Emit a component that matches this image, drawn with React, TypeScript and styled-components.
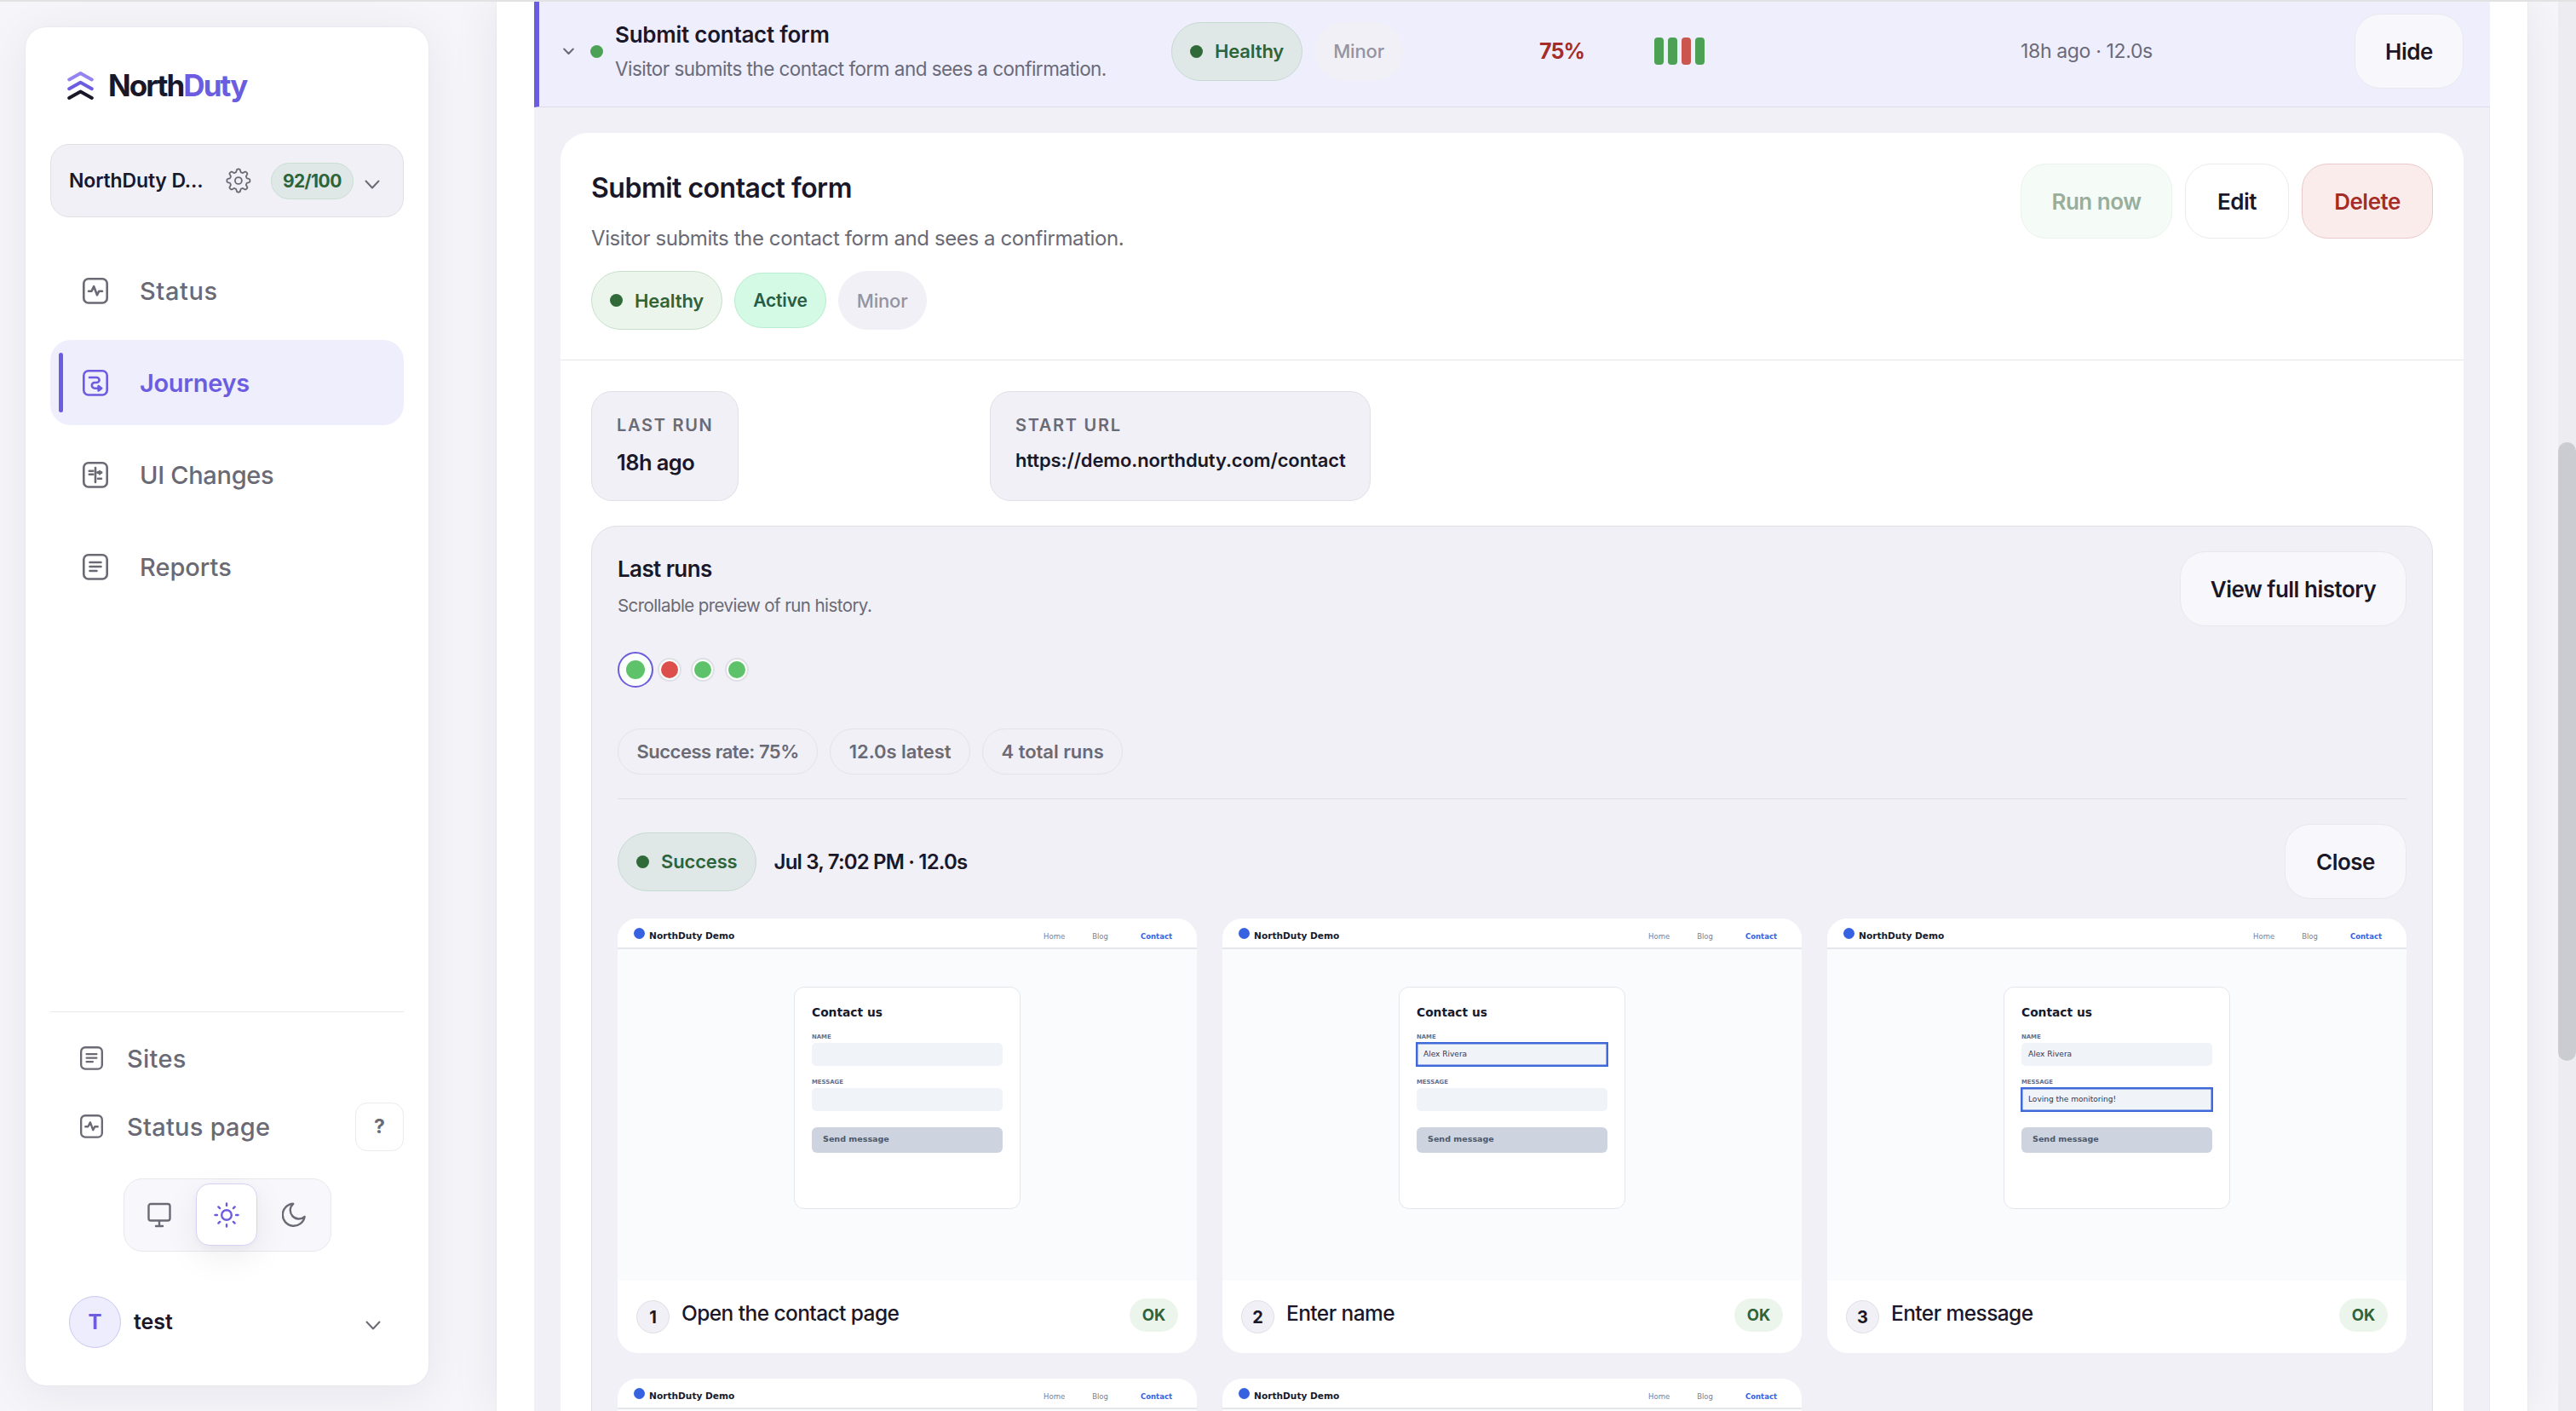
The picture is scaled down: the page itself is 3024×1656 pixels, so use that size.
import React, { useState } from 'react';
import styled, { createGlobalStyle, css } from 'styled-components';

const GlobalStyle = createGlobalStyle`
  * {
    box-sizing: border-box;
  }

  body {
    margin: 0;
    overflow: hidden;
    color: #1a1828;
    background: #f5f5fa;
    font-family: 'Inter', sans-serif;
  }

  button {
    font-family: inherit;
    cursor: pointer;
  }

  p, h1, h2, h3 {
    margin: 0;
  }
`;

/* ---------- page ---------- */

const Page = styled.div`
  display: flex;
  height: 1656px;
  border-top: 2px solid #e2e2e3;
  overflow: hidden;
`;

const Sidebar = styled.aside`
  display: flex;
  flex-direction: column;
  flex: none;
  width: 473px;
  height: 1594px;
  margin: 30px 80px 0 30px;
  padding: 0 29px;
  border-radius: 24px;
  background: #fff;
  box-shadow: 0 8px 56px rgba(26, 24, 40, 0.07), 0 0 2px rgba(26, 24, 40, 0.08);
`;

const Main = styled.main`
  flex: none;
  width: 2384px;
  height: 1654px;
  padding: 0 44px;
  background: #fff;
  box-shadow: 0 0 56px rgba(26, 24, 40, 0.07), 0 0 2px rgba(26, 24, 40, 0.08);
`;

const ScrollTrack = styled.div`
  flex: none;
  width: 21px;
  height: 1654px;
  margin-left: 36px;
  padding-top: 517px;
  background: #ededf1;
`;

const ScrollThumb = styled.div`
  height: 726px;
  border-radius: 11px;
  background: #cbccd1;
`;

/* ---------- sidebar ---------- */

const Brand = styled.div`
  display: flex;
  align-items: center;
  height: 68px;
  margin-top: 34px;
  padding-left: 20px;
  font-size: 35px;
  font-weight: 700;
  letter-spacing: -1.9px;

  svg {
    margin-right: 17px;
  }

  span {
    color: #6c5ce0;
  }
`;

const SiteSelect = styled.div`
  display: flex;
  align-items: center;
  height: 86px;
  margin-top: 35px;
  padding: 0 27px 0 21px;
  border: 1px solid #e0e0e6;
  border-radius: 22px;
  background: #f1f0f6;
`;

const SiteName = styled.span`
  width: 185px;
  font-size: 23px;
  font-weight: 600;
  letter-spacing: -0.15px;
  white-space: nowrap;
`;

const Score = styled.span`
  width: 98px;
  height: 43px;
  margin: 0 13px 0 23px;
  border: 1px solid #c9dfd0;
  border-radius: 22px;
  background: #dfe8e7;
  color: #2f6338;
  font-size: 21px;
  font-weight: 700;
  line-height: 41px;
  letter-spacing: -0.6px;
  text-align: center;
`;

const Nav = styled.nav`
  display: flex;
  flex-direction: column;
  gap: 8px;
  margin-top: 36px;
`;

const NavItem = styled.a<{ $active?: boolean; $track?: number }>`
  display: flex;
  align-items: center;
  height: 100px;
  padding-left: 10px;
  border-radius: 24px;
  color: ${(p) => (p.$active ? '#6c5ce0' : '#6a6a75')};
  background: ${(p) => (p.$active ? '#eeeefd' : 'transparent')};
  font-size: 29px;
  font-weight: ${(p) => (p.$active ? 600 : 500)};
  letter-spacing: ${(p) => p.$track ?? -0.3}px;

  &::before {
    content: '';
    width: 5px;
    height: 70px;
    margin-right: 23px;
    border-radius: 3px;
    background: ${(p) => (p.$active ? '#6c5ce0' : 'transparent')};
  }

  svg {
    margin-right: 37px;
  }
`;

const SideFooter = styled.div`
  margin-top: auto;
  padding: 14px 0 44px;
  border-top: 1px solid #e9e9ed;
`;

const FooterRow = styled.div`
  display: flex;
  align-items: center;
  height: 80px;
  padding-left: 35px;
  color: #6a6a75;
  font-size: 29px;
  font-weight: 500;
  letter-spacing: 0.25px;

  svg {
    margin-right: 28px;
  }
`;

const HelpButton = styled.button`
  width: 57px;
  height: 57px;
  margin-left: auto;
  padding: 0;
  border: 1px solid #ebebee;
  border-radius: 14px;
  background: #fff;
  color: #6a6a75;
  font-size: 23px;
  font-weight: 700;
`;

const ThemeSwitch = styled.div`
  display: flex;
  gap: 7px;
  width: 244px;
  height: 86px;
  margin: 21px auto 0;
  padding: 5px;
  border: 1px solid #e8e8ed;
  border-radius: 22px;
  background: #f8f8fc;
`;

const ThemeOption = styled.button<{ $on?: boolean }>`
  display: flex;
  align-items: center;
  justify-content: center;
  width: 72px;
  height: 73px;
  padding: 0;
  border: 1px solid transparent;
  border-radius: 16px;
  background: none;
  color: #6a6a75;

  ${(p) =>
    p.$on &&
    css`
      border-color: #d6d2f5;
      background: #fff;
      color: #6c5ce0;
      box-shadow: 0 12px 40px rgba(26, 24, 40, 0.07), 0 3px 8px rgba(26, 24, 40, 0.04);
    `}
`;

const UserRow = styled.div`
  display: flex;
  align-items: center;
  height: 62px;
  margin-top: 51px;
  padding: 0 27px 0 22px;
  font-size: 25px;
  font-weight: 600;

  svg {
    margin-left: auto;
  }
`;

const Avatar = styled.span`
  width: 61px;
  height: 61px;
  margin-right: 15px;
  border: 1px solid #cbc6f1;
  border-radius: 50%;
  background: #eeedfd;
  color: #6c5ce0;
  font-size: 24px;
  font-weight: 700;
  line-height: 60px;
  text-align: center;
`;

const Down = styled.svg`
  flex: none;
  margin-top: 9px;
`;

/* ---------- journeys table ---------- */

const JourneyRow = styled.div`
  display: grid;
  grid-template-columns: 32px 29px 653px 432px 135px 430px 1fr auto;
  align-items: center;
  height: 124px;
  padding: 0 31px 7px 28px;
  border-left: 6px solid #6c5ce0;
  border-bottom: 1px solid #dddde9;
  background: #eeeefd;
`;

const JourneyTitle = styled.h3`
  font-size: 26px;
  font-weight: 600;
  line-height: 41px;
  letter-spacing: -0.25px;
`;

const JourneySub = styled.p`
  color: #6a6a79;
  font-size: 22.5px;
  line-height: 40px;
  letter-spacing: -0.54px;
`;

const Percent = styled.span`
  color: #a52c27;
  font-size: 25px;
  font-weight: 700;
  letter-spacing: -0.9px;
`;

const Bars = styled.div`
  display: flex;
  gap: 5px;
`;

const Bar = styled.i<{ $fail?: boolean }>`
  width: 11px;
  height: 32px;
  border-radius: 4px;
  background: ${(p) => (p.$fail ? '#cb5650' : '#4ca155')};
`;

const When = styled.span`
  color: #6a6a79;
  font-size: 23px;
  letter-spacing: -0.35px;
`;

const Pills = styled.div`
  display: flex;
  align-items: center;
  gap: 14px;
`;

const pillTones = {
  healthy: css`
    border-color: #c6dfcb;
    background: #ecf5ec;
    color: #2f6338;
  `,
  shaded: css`
    border-color: #c6dad0;
    background: #dfe8e7;
    color: #2f6338;
  `,
  active: css`
    height: 65px;
    border-color: #b9edcf;
    background: #d4f9e4;
    color: #275c46;
    font-size: 21px;
  `,
  muted: css`
    border-color: #f1f0f6;
    background: #f1f0f6;
    color: #9494a1;
    font-weight: 500;
  `,
};

const Pill = styled.span<{ $tone: keyof typeof pillTones }>`
  display: flex;
  align-items: center;
  gap: 14px;
  height: 69px;
  padding: 0 21px;
  border: 1px solid;
  border-radius: 35px;
  font-size: 22px;
  font-weight: 600;
  letter-spacing: -0.15px;
  ${(p) => pillTones[p.$tone]}
`;

const Dot = styled.i<{ $color?: string }>`
  width: 15px;
  height: 15px;
  border-radius: 50%;
  background: ${(p) => p.$color || '#2f6a38'};
`;

const buttonKinds = {
  plain: css`
    border-color: #ebebee;
    background: #fff;
  `,
  soft: css`
    border-color: #e8e8ef;
    background: #f8f8fc;
  `,
  run: css`
    border-color: #eaf3ed;
    background: #f5fbf6;
    color: #97ae9d;
  `,
  danger: css`
    border-color: #ebc9ca;
    background: #fbecec;
    color: #a52c27;
  `,
};

const Button = styled.button<{ $kind: keyof typeof buttonKinds; $width: number }>`
  width: ${(p) => p.$width}px;
  height: 88px;
  padding: 0;
  border: 1px solid;
  border-radius: 30px;
  color: #1a1828;
  font-size: 26px;
  font-weight: 600;
  letter-spacing: -0.5px;
  ${(p) => buttonKinds[p.$kind]}
`;

/* ---------- journey detail ---------- */

const Expanded = styled.div`
  height: 1600px;
  padding: 30px 30px 0 31px;
  border-right: 1px solid #e9e9f0;
  background: #f1f0f6;
`;

const Detail = styled.section`
  height: 1600px;
  border-radius: 32px;
  background: #fff;
`;

const DetailHeader = styled.header`
  display: flex;
  justify-content: space-between;
  align-items: flex-start;
  height: 267px;
  padding: 36px;
  border-bottom: 1px solid #e6e6ea;
`;

const DetailTitle = styled.h2`
  font-size: 32px;
  font-weight: 600;
  line-height: 57px;
  letter-spacing: -0.5px;
`;

const DetailSub = styled.p`
  margin-bottom: 8px;
  color: #6a6a75;
  font-size: 24px;
  line-height: 61px;
  letter-spacing: -0.4px;
`;

const Actions = styled.div`
  display: flex;
  gap: 15px;
`;

const DetailBody = styled.div`
  padding: 36px;
`;

const Stats = styled.div`
  display: grid;
  grid-template-columns: 468px auto;
  justify-content: start;
  justify-items: start;
  margin-bottom: 29px;
`;

const Stat = styled.div<{ $width: number }>`
  width: ${(p) => p.$width}px;
  height: 129px;
  padding: 24px 29px 0;
  border: 1px solid #e0e0e6;
  border-radius: 24px;
  background: #f1f0f6;
`;

const StatLabel = styled.div`
  color: #6a6a75;
  font-size: 20px;
  font-weight: 600;
  line-height: 30px;
  letter-spacing: 1.7px;
  white-space: nowrap;
`;

const StatValue = styled.div<{ $url?: boolean }>`
  margin-top: 8px;
  font-size: ${(p) => (p.$url ? 22 : 25.5)}px;
  font-weight: 600;
  line-height: ${(p) => (p.$url ? 36 : 42)}px;
  letter-spacing: ${(p) => (p.$url ? -0.12 : -0.6)}px;
  white-space: nowrap;
`;

const Runs = styled.section`
  height: 1200px;
  padding: 29px 30px;
  border: 1px solid #e0e0e6;
  border-radius: 30px;
  background: #f1f0f6;
`;

const RunsHeader = styled.div`
  display: flex;
  justify-content: space-between;
  height: 87px;
`;

const RunsTitle = styled.h3`
  font-size: 26px;
  font-weight: 600;
  line-height: 41px;
  letter-spacing: -0.6px;
`;

const RunsSub = styled.p`
  color: #6a6a75;
  font-size: 20.5px;
  line-height: 45px;
  letter-spacing: -0.58px;
`;

const RunDots = styled.div`
  display: flex;
  align-items: center;
  gap: 11.5px;
  height: 42px;
  margin-top: 31px;
`;

const RunDot = styled.button<{ $fail?: boolean; $selected?: boolean }>`
  display: flex;
  align-items: center;
  justify-content: center;
  width: ${(p) => (p.$selected ? 42 : 28)}px;
  height: ${(p) => (p.$selected ? 42 : 28)}px;
  margin-right: ${(p) => (p.$selected ? -7 : 0)}px;
  padding: 0;
  border: ${(p) => (p.$selected ? '2px solid #6c5ce0' : '2px solid #dfe0e5')};
  border-radius: 50%;
  background: #fbfffb;

  &::after {
    content: '';
    width: ${(p) => (p.$selected ? 22 : 20)}px;
    height: ${(p) => (p.$selected ? 22 : 20)}px;
    border-radius: 50%;
    background: ${(p) => (p.$fail ? '#dc4f4a' : '#5ec26a')};
  }
`;

const Chips = styled.div`
  display: flex;
  gap: 14px;
  margin-top: 48px;
  padding-bottom: 28px;
  border-bottom: 1px solid #dfdfe6;
`;

const Chip = styled.span<{ $track: number }>`
  height: 54px;
  padding: 0 21.5px;
  border: 1px solid #e3e3e9;
  border-radius: 27px;
  color: #6a6a75;
  font-size: 22px;
  font-weight: 600;
  line-height: 53px;
  letter-spacing: ${(p) => p.$track}px;
`;

const RunHead = styled.div`
  display: flex;
  align-items: center;
  height: 88px;
  margin: 29px 0 23px;
`;

const RunDate = styled.span`
  margin: 0 auto 0 21px;
  font-size: 24px;
  font-weight: 600;
  letter-spacing: -0.82px;
`;

const Steps = styled.div`
  display: grid;
  grid-template-columns: repeat(3, 1fr);
  gap: 30px;
`;

const StepCard = styled.article`
  height: 510px;
  border-radius: 24px;
  background: #fff;
  overflow: hidden;
`;

const Caption = styled.div`
  display: flex;
  align-items: flex-start;
  padding: 23px 22px 0;
  white-space: nowrap;
`;

const StepNumber = styled.span`
  width: 39px;
  height: 39px;
  margin-right: 14px;
  border: 1px solid #dedee5;
  border-radius: 50%;
  background: #f1f0f6;
  font-size: 20px;
  font-weight: 700;
  line-height: 38px;
  text-align: center;
`;

const StepTitle = styled.span`
  margin: -3px auto 0 0;
  font-size: 24.5px;
  font-weight: 500;
  line-height: 36px;
  letter-spacing: -0.58px;
`;

const Ok = styled.span`
  width: 57px;
  height: 39px;
  margin-top: -2px;
  border-radius: 20px;
  background: #ecf5ec;
  color: #2f6338;
  font-size: 18.5px;
  font-weight: 700;
  line-height: 39px;
  text-align: center;
`;

/* ---------- demo site shown in the step previews ---------- */

const Shot = styled.div`
  height: 425px;
  background: #f9fbfd;
  color: #161a2b;
  font-family: 'DejaVu Sans', sans-serif;
`;

const ShotBar = styled.div`
  display: flex;
  align-items: center;
  height: 36px;
  padding: 2px 29px 0 19px;
  border-bottom: 2px solid #e3e6eb;
  background: #fff;
`;

const ShotDot = styled.i`
  width: 13px;
  height: 13px;
  margin: -2px 5px 0 0;
  border-radius: 50%;
  background: #3661e0;
`;

const ShotBrand = styled.b`
  margin: 5px auto 0 0;
  font-size: 10.62px;
`;

const ShotLink = styled.span<{ $current?: boolean }>`
  margin: 6px 0 0 ${(p) => (p.$current ? 38 : 32)}px;
  color: ${(p) => (p.$current ? '#3661e0' : '#7a8191')};
  font-size: 8.5px;
  font-weight: ${(p) => (p.$current ? 700 : 400)};
`;

const Form = styled.div`
  width: 266px;
  height: 261px;
  margin: 44px auto 0;
  padding: 21px 20px 0;
  border: 1px solid #e3e6ec;
  border-radius: 12px;
  background: #fff;
`;

const FormTitle = styled.div`
  padding-bottom: 2px;
  font-size: 13.8px;
  font-weight: 700;
  line-height: 16px;
`;

const Label = styled.div`
  margin-top: 12px;
  color: #64708a;
  font-size: 6.9px;
  font-weight: 700;
  line-height: 14px;
`;

const Field = styled.div<{ $focus?: boolean }>`
  height: 27px;
  padding-left: 8px;
  border-radius: ${(p) => (p.$focus ? 0 : 5)}px;
  background: #f0f3f8;
  box-shadow: ${(p) => (p.$focus ? '0 0 0 1px #3f68d8, inset 0 0 0 1.5px #3f68d8' : 'none')};
  color: #30384c;
  font-size: 9.03px;
  line-height: 26px;
`;

const Send = styled.div`
  height: 30px;
  margin-top: 19px;
  padding-left: 13px;
  border-radius: 6px;
  background: #cdd3df;
  color: #4c586b;
  font-size: 9.56px;
  font-weight: 700;
  line-height: 28px;
`;

/* ---------- icons ---------- */

const boxed = (children: React.ReactNode, size = 30) => (
  <svg width={size} height={size + 1} viewBox="0 0 30 31" fill="none" stroke="currentColor" strokeWidth="2.6" strokeLinecap="round" strokeLinejoin="round">
    <rect x="1.3" y="1.3" width="27.4" height="28.2" rx="5.5" />
    {children}
  </svg>
);

const PulseIcon = ({ size }: { size?: number }) => boxed(<path d="M7 15.8h3.4l2.8-5.6 3.8 10 2.2-4.4H23" />, size);

const LinesIcon = ({ size }: { size?: number }) => boxed(<path d="M8.5 10h13M8.5 15h13M8.5 20h8" />, size);

const RouteIcon = () =>
  boxed(
    <>
      <path d="M8 9h8.2c2 0 3.4 1.4 3.4 3s-1.4 3-3.4 3h-2c-2 0-3.4 1.6-3.4 3.3s1.4 3.4 3.4 3.4H18" />
      <path d="M18.6 19l3.6 2.7-3.6 2.7z" fill="currentColor" />
    </>
  );

const DiffIcon = () =>
  boxed(
    <>
      <path d="M7.8 10.8h4.4M7.8 14.8h4.4M15 7v17M18 19.8h4" />
      <path d="M17.5 12.6h4.5M20 11.2v2.8" strokeWidth="3" />
    </>
  );

const gearPath = () => {
  const points: string[] = [];
  for (let i = 0; i < 96; i++) {
    const a = (i / 96) * Math.PI * 2;
    const wave = Math.max(-1, Math.min(1, Math.cos(a * 8) * 1.7));
    const r = 11.9 + wave * 1.7;
    points.push(`${(15 + r * Math.sin(a)).toFixed(2)} ${(15 - r * Math.cos(a)).toFixed(2)}`);
  }
  return `M${points.join('L')}Z`;
};

const GearIcon = () => (
  <svg width="30" height="30" viewBox="0 0 30 30" fill="none" stroke="#6a6a75" strokeWidth="1.8" strokeLinejoin="round">
    <path d={gearPath()} />
    <circle cx="15" cy="15" r="4" />
  </svg>
);

const LogoIcon = () => (
  <svg width="31" height="35" viewBox="0 0 31 35" fill="none" strokeWidth="4" strokeLinecap="round" strokeLinejoin="round">
    <path d="M2.2 10.4L15.5 3l13.3 7.4" stroke="#9483f0" />
    <path d="M2.2 21.2L15.5 13.8l13.3 7.4" stroke="#6c5ce0" />
    <path d="M2.2 32L15.5 24.6 28.8 32" stroke="#1a1828" />
  </svg>
);

const DownIcon = () => (
  <Down width="18" height="12" viewBox="0 0 18 12" fill="none" stroke="#6a6a75" strokeWidth="2" strokeLinecap="round" strokeLinejoin="round">
    <path d="M1.5 1.5L9 9.5l7.5-8" />
  </Down>
);

const RowChevron = () => (
  <svg width="13" height="9" viewBox="0 0 13 9" fill="none" stroke="#6a6a79" strokeWidth="2" strokeLinecap="round" strokeLinejoin="round">
    <path d="M1.2 1.5l5.3 5.5 5.3-5.5" />
  </svg>
);

const MonitorIcon = () => (
  <svg width="28" height="30" viewBox="0 0 28 30" fill="none" stroke="currentColor" strokeWidth="2.4" strokeLinecap="round" strokeLinejoin="round">
    <rect x="1.5" y="2" width="25" height="19.5" rx="2.5" />
    <path d="M14 22v6M10 28h8" />
  </svg>
);

const SunIcon = () => (
  <svg width="30" height="30" viewBox="0 0 30 30" fill="none" stroke="currentColor" strokeWidth="2.4" strokeLinecap="round">
    <circle cx="15" cy="15" r="5.8" />
    <path d="M15 1.5v2.4M15 26.1v2.4M1.5 15h2.4M26.1 15h2.4M5.4 5.4l1.7 1.7M22.9 22.9l1.7 1.7M5.4 24.6l1.7-1.7M22.9 7.1l1.7-1.7" />
  </svg>
);

const MoonIcon = () => (
  <svg width="28" height="30" viewBox="0 0 28 30" fill="none" stroke="currentColor" strokeWidth="2.4" strokeLinejoin="round">
    <path d="M13.2 1.8A13 13 0 1 0 26.6 17 9.6 9.6 0 0 1 13.2 1.8z" />
  </svg>
);

/* ---------- data ---------- */

const navItems = [
  { label: 'Status', icon: <PulseIcon />, track: 0.6 },
  { label: 'Journeys', icon: <RouteIcon /> },
  { label: 'UI Changes', icon: <DiffIcon /> },
  { label: 'Reports', icon: <LinesIcon />, track: 0 },
];

const runs = [false, true, false, false];
const recentBars = [false, false, true, false];

type Step = { title: string; name?: string; message?: string; focus?: 'name' | 'message' };

const steps: Step[] = [
  { title: 'Open the contact page' },
  { title: 'Enter name', name: 'Alex Rivera', focus: 'name' },
  { title: 'Enter message', name: 'Alex Rivera', message: 'Loving the monitoring!', focus: 'message' },
];

const pendingSteps = [4, 5];

const DemoHeader = () => (
  <ShotBar>
    <ShotDot />
    <ShotBrand>NorthDuty Demo</ShotBrand>
    <ShotLink>Home</ShotLink>
    <ShotLink>Blog</ShotLink>
    <ShotLink $current>Contact</ShotLink>
  </ShotBar>
);

const StepPreview = ({ step, index }: { step: Step; index: number }) => (
  <StepCard>
    <Shot>
      <DemoHeader />
      <Form>
        <FormTitle>Contact us</FormTitle>
        <Label>NAME</Label>
        <Field $focus={step.focus === 'name'}>{step.name}</Field>
        <Label>MESSAGE</Label>
        <Field $focus={step.focus === 'message'}>{step.message}</Field>
        <Send>Send message</Send>
      </Form>
    </Shot>
    <Caption>
      <StepNumber>{index + 1}</StepNumber>
      <StepTitle>{step.title}</StepTitle>
      <Ok>OK</Ok>
    </Caption>
  </StepCard>
);

const App = () => {
  const [selectedRun, setSelectedRun] = useState(0);
  const [theme, setTheme] = useState('light');

  return (
    <>
      <GlobalStyle />
      <Page>
        <Sidebar>
          <Brand>
            <LogoIcon />
            North<span>Duty</span>
          </Brand>
          <SiteSelect>
            <SiteName>NorthDuty D...</SiteName>
            <GearIcon />
            <Score>92/100</Score>
            <DownIcon />
          </SiteSelect>
          <Nav>
            {navItems.map((item) => (
              <NavItem key={item.label} $active={item.label === 'Journeys'} $track={item.track}>
                {item.icon}
                {item.label}
              </NavItem>
            ))}
          </Nav>
          <SideFooter>
            <FooterRow>
              <LinesIcon size={27} />
              Sites
            </FooterRow>
            <FooterRow>
              <PulseIcon size={27} />
              Status page
              <HelpButton>?</HelpButton>
            </FooterRow>
            <ThemeSwitch>
              <ThemeOption $on={theme === 'system'} onClick={() => setTheme('system')}>
                <MonitorIcon />
              </ThemeOption>
              <ThemeOption $on={theme === 'light'} onClick={() => setTheme('light')}>
                <SunIcon />
              </ThemeOption>
              <ThemeOption $on={theme === 'dark'} onClick={() => setTheme('dark')}>
                <MoonIcon />
              </ThemeOption>
            </ThemeSwitch>
            <UserRow>
              <Avatar>T</Avatar>
              test
              <DownIcon />
            </UserRow>
          </SideFooter>
        </Sidebar>

        <Main>
          <JourneyRow>
            <RowChevron />
            <Dot $color="#4ca155" />
            <div>
              <JourneyTitle>Submit contact form</JourneyTitle>
              <JourneySub>Visitor submits the contact form and sees a confirmation.</JourneySub>
            </div>
            <Pills>
              <Pill $tone="shaded">
                <Dot />
                Healthy
              </Pill>
              <Pill $tone="muted">Minor</Pill>
            </Pills>
            <Percent>75%</Percent>
            <Bars>
              {recentBars.map((fail, i) => (
                <Bar key={i} $fail={fail} />
              ))}
            </Bars>
            <When>18h ago · 12.0s</When>
            <Button $kind="soft" $width={128}>Hide</Button>
          </JourneyRow>

          <Expanded>
            <Detail>
              <DetailHeader>
                <div>
                  <DetailTitle>Submit contact form</DetailTitle>
                  <DetailSub>Visitor submits the contact form and sees a confirmation.</DetailSub>
                  <Pills>
                    <Pill $tone="healthy">
                      <Dot />
                      Healthy
                    </Pill>
                    <Pill $tone="active">Active</Pill>
                    <Pill $tone="muted">Minor</Pill>
                  </Pills>
                </div>
                <Actions>
                  <Button $kind="run" $width={178}>Run now</Button>
                  <Button $kind="plain" $width={122}>Edit</Button>
                  <Button $kind="danger" $width={154}>Delete</Button>
                </Actions>
              </DetailHeader>

              <DetailBody>
                <Stats>
                  <Stat $width={173}>
                    <StatLabel>LAST RUN</StatLabel>
                    <StatValue>18h ago</StatValue>
                  </Stat>
                  <Stat $width={447}>
                    <StatLabel>START URL</StatLabel>
                    <StatValue $url>https://demo.northduty.com/contact</StatValue>
                  </Stat>
                </Stats>

                <Runs>
                  <RunsHeader>
                    <div>
                      <RunsTitle>Last runs</RunsTitle>
                      <RunsSub>Scrollable preview of run history.</RunsSub>
                    </div>
                    <Button $kind="soft" $width={266}>View full history</Button>
                  </RunsHeader>
                  <RunDots>
                    {runs.map((fail, i) => (
                      <RunDot key={i} $fail={fail} $selected={i === selectedRun} onClick={() => setSelectedRun(i)} />
                    ))}
                  </RunDots>
                  <Chips>
                    <Chip $track={-0.5}>Success rate: 75%</Chip>
                    <Chip $track={-0.05}>12.0s latest</Chip>
                    <Chip $track={-0.05}>4 total runs</Chip>
                  </Chips>
                  <RunHead>
                    <Pill $tone="shaded">
                      <Dot />
                      Success
                    </Pill>
                    <RunDate>Jul 3, 7:02 PM · 12.0s</RunDate>
                    <Button $kind="soft" $width={143}>Close</Button>
                  </RunHead>
                  <Steps>
                    {steps.map((step, i) => (
                      <StepPreview key={step.title} step={step} index={i} />
                    ))}
                    {pendingSteps.map((n) => (
                      <StepCard key={n}>
                        <Shot>
                          <DemoHeader />
                        </Shot>
                      </StepCard>
                    ))}
                  </Steps>
                </Runs>
              </DetailBody>
            </Detail>
          </Expanded>
        </Main>

        <ScrollTrack>
          <ScrollThumb />
        </ScrollTrack>
      </Page>
    </>
  );
};

export default App;
